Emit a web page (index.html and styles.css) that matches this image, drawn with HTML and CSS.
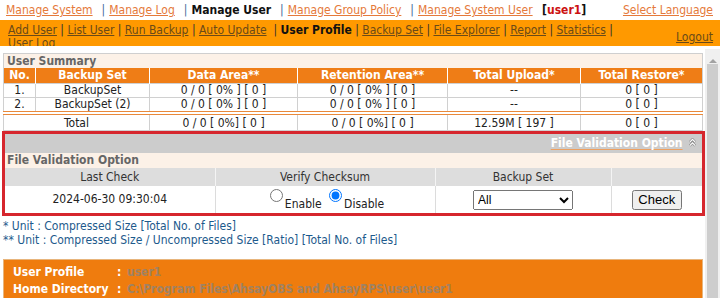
FILE: index.html
```html
<!DOCTYPE html>
<html lang="en">
<head>
  <meta charset="UTF-8">
  <title>User Profile</title>
  <link rel="stylesheet" href="styles.css">
</head>
<body>

  <!-- Top menu -->
  <div class="topnav">
    <div class="topnav-links">
      <a href="#">Manage System</a><span class="sep">|</span><a href="#">Manage Log</a><span class="sep">|</span><b class="current">Manage User</b><span class="sep">|</span><a href="#">Manage Group Policy</a><span class="sep">|</span><a href="#">Manage System User</a>
      <span class="login">[<span class="login-name">user1</span>]</span>
    </div>
    <a href="#" class="lang">Select Language</a>
  </div>

  <!-- Sub menu -->
  <div class="subnav">
    <div class="subnav-links">
      <a href="#">Add User</a> | <a href="#">List User</a> | <a href="#">Run Backup</a> | <a href="#">Auto Update</a>&nbsp; | <b>User Profile</b> | <a href="#">Backup Set</a> | <a href="#">File Explorer</a> | <a href="#">Report</a> | <a href="#">Statistics</a> |<br>
      <a href="#">User Log</a>
    </div>
    <a href="#" class="logout">Logout</a>
  </div>

  <div class="frame">
    <div class="content">

      <!-- User summary -->
      <table class="summary">
        <tr><td colspan="6" class="caption">User Summary</td></tr>
        <tr class="head">
          <th style="width:32px">No.</th>
          <th style="width:114px">Backup Set</th>
          <th style="width:148px">Data Area**</th>
          <th style="width:150px">Retention Area**</th>
          <th style="width:133px">Total Upload*</th>
          <th>Total Restore*</th>
        </tr>
        <tr>
          <td>1.</td><td>BackupSet</td><td>0 / 0 [ 0% ] [ 0 ]</td><td>0 / 0 [ 0% ] [ 0 ]</td><td>--</td><td>0 [ 0 ]</td>
        </tr>
        <tr>
          <td>2.</td><td>BackupSet (2)</td><td>0 / 0 [ 0% ] [ 0 ]</td><td>0 / 0 [ 0% ] [ 0 ]</td><td>--</td><td>0 [ 0 ]</td>
        </tr>
        <tr class="total">
          <td colspan="2">Total</td><td>0 / 0 [ 0%] [ 0 ]</td><td>0 / 0 [ 0%] [ 0 ]</td><td>12.59M [ 197 ]</td><td>0 [ 0 ]</td>
        </tr>
      </table>

      <!-- File validation -->
      <div class="validation">
        <div class="validation-bar">
          <a href="#">File Validation Option</a>
          <svg width="7" height="9" viewBox="0 0 7 9">
            <path d="M0.8 4.2 L3.5 1.3 L6.2 4.2 M0.8 7.7 L3.5 4.8 L6.2 7.7" fill="none" stroke="#8a8a8a" stroke-width="2.4"/>
            <path d="M0.8 4.2 L3.5 1.3 L6.2 4.2 M0.8 7.7 L3.5 4.8 L6.2 7.7" fill="none" stroke="#fff" stroke-width="1.1"/>
          </svg>
        </div>
        <table class="check-table">
          <tr><td colspan="4" class="caption">File Validation Option</td></tr>
          <tr class="head">
            <th style="width:210px">Last Check</th>
            <th style="width:220px">Verify Checksum</th>
            <th style="width:176px">Backup Set</th>
            <th></th>
          </tr>
          <tr>
            <td>2024-06-30 09:30:04</td>
            <td>
              <input type="radio" name="verify" id="enable"><label for="enable">Enable</label>
              <input type="radio" name="verify" id="disable" checked><label for="disable">Disable</label>
            </td>
            <td>
              <select class="set-select">
                <option>All</option>
                <option>BackupSet</option>
                <option>BackupSet (2)</option>
              </select>
            </td>
            <td><button class="check-button">Check</button></td>
          </tr>
        </table>
      </div>

      <p class="note">* Unit : Compressed Size [Total No. of Files]<br>** Unit : Compressed Size / Uncompressed Size [Ratio] [Total No. of Files]</p>

      <!-- User profile -->
      <div class="profile">
        <div class="profile-row"><span class="profile-label">User Profile</span><span class="colon">:</span><span class="profile-value">user1</span></div>
        <div class="profile-row"><span class="profile-label">Home Directory</span><span class="colon">:</span><span class="profile-value">C:\Program Files\AhsayOBS and AhsayRPS\user\user1</span></div>
      </div>

    </div>

    <!-- frame scrollbar -->
    <div class="scrollbar">
      <div class="scroll-up"></div>
      <div class="scroll-thumb"></div>
    </div>
  </div>

</body>
</html>
```

FILE: styles.css
```css
* {
  box-sizing: border-box;
}
html, body {
  margin: 0;
  overflow: hidden;
}
body {
  font-family: Tahoma, "DejaVu Sans Condensed", "DejaVu Sans", sans-serif;
  font-size: 12px;
  color: #222;
  background-color: #fff;
}

/* top menu */
.topnav {
  display: flex;
  align-items: center;
  height: 20px;
  padding: 0 7px 0 6px;
  font-size: 12px;
}
.topnav-links {
  flex: 1;
  white-space: nowrap;
}
.topnav a {
  color: #e5793a;
}
.topnav .sep {
  color: #44699a;
  margin: 0 4px 0 9px;
}
.current {
  color: #111;
}
.login {
  margin-left: 6px;
  font-weight: bold;
  color: #111;
}
.login-name {
  color: #cc1111;
}

/* sub menu */
.subnav {
  display: flex;
  height: 26px;
  overflow: hidden;
  background-color: #ff9900;
}
.subnav-links {
  flex: 1;
  padding: 4px 0 0 8px;
  line-height: 13px;
  color: #333;
}
.subnav a {
  color: #6a4a18;
}
.subnav b {
  color: #111;
}
.logout {
  align-self: flex-end;
  padding: 0 7px 2px 0;
  line-height: 13px;
}

/* frame with its scrollbar */
.frame {
  display: flex;
  height: 252px;
}
.content {
  flex: 1;
  overflow: hidden;
  padding: 7px 0 0 3px;
}
.scrollbar {
  display: flex;
  flex-direction: column;
  width: 15px;
  margin-top: 3px;
  padding: 0 2px;
  background-color: #f0f0f0;
}
.scroll-up {
  height: 14px;
  margin: 0 auto;
  width: 0;
  border-left: 4px solid transparent;
  border-right: 4px solid transparent;
  border-bottom: 4px solid #a3a3a3;
  border-top: 5px solid transparent;
}
.scroll-thumb {
  flex: 1;
  margin-top: 1px;
  background-color: #cdcdcd;
}

table {
  border-collapse: collapse;
  font-size: 12px;
}
td, th {
  padding: 0;
  line-height: 13px;
  text-align: center;
}

.summary {
  width: 700px;
  border: 1px solid #cfcfcf;
}
.caption {
  background-color: #fcf1e7;
  color: #666;
  font-weight: bold;
  text-align: left;
  padding: 1px 3px 0;
}
.summary .head th {
  background-color: #ef7d16;
  color: #fff;
  border-left: 1px solid #fff;
  padding: 1px 0;
}
.summary .head th:first-child {
  border-left: none;
}
.summary td {
  border: 1px solid #d0d0d0;
}
.summary td.caption {
  border: none;
}
.summary .total td {
  border-top: 4px double #e9893a;
  padding-top: 2px;
}

/* file validation box */
.validation {
  width: 703px;
  margin: 0 0 0 -1px;
  border: 3px solid #d6262d;
}
.validation-bar {
  height: 19px;
  background-color: #cccccc;
  text-align: right;
  padding: 2px 6px 0 0;
}
.validation-bar a {
  color: #fff;
  font-weight: bold;
  text-decoration-color: #eda060;
  text-underline-offset: 2px;
}
.validation-bar svg {
  margin-left: 3px;
}
.check-table {
  width: 100%;
}
.check-table .caption {
  padding: 1px 2px 1px;
}
.check-table .head th {
  background-color: #dddddd;
  color: #333;
  font-weight: normal;
  border-left: 1px solid #f4f4f4;
  padding: 2px 0;
  height: 18px;
}
.check-table .head th:first-child {
  border-left: none;
}
.check-table td {
  border-left: 1px solid #dcdcdc;
  height: 27px;
}
.check-table td:first-child {
  border-left: none;
}
.check-table td.caption {
  height: 15px;
}
.check-table input {
  margin: 0 2px 0 4px;
  vertical-align: 1px;
}
.check-table label {
  vertical-align: -5px;
}
.set-select {
  width: 100px;
  height: 20px;
  font-family: "Liberation Sans", Arial, sans-serif;
  font-size: 12px;
}
.check-button {
  width: 50px;
  height: 20px;
  padding: 0;
  font-family: "Liberation Sans", Arial, sans-serif;
  font-size: 13px;
}

.note {
  margin: 3px 0 0;
  line-height: 14px;
  color: #1d5a8c;
}

/* profile */
.profile {
  width: 700px;
  margin-top: 12px;
  padding: 4px 9px;
  background-color: #ef7c0e;
  border: 1px solid #e8b57c;
  border-bottom: none;
  font-weight: bold;
}
.profile-row {
  display: flex;
  line-height: 17px;
}
.profile-label {
  width: 104px;
  color: #fff;
}
.colon {
  width: 10px;
  color: #fff;
}
.profile-value {
  color: #a08262;
}
```
